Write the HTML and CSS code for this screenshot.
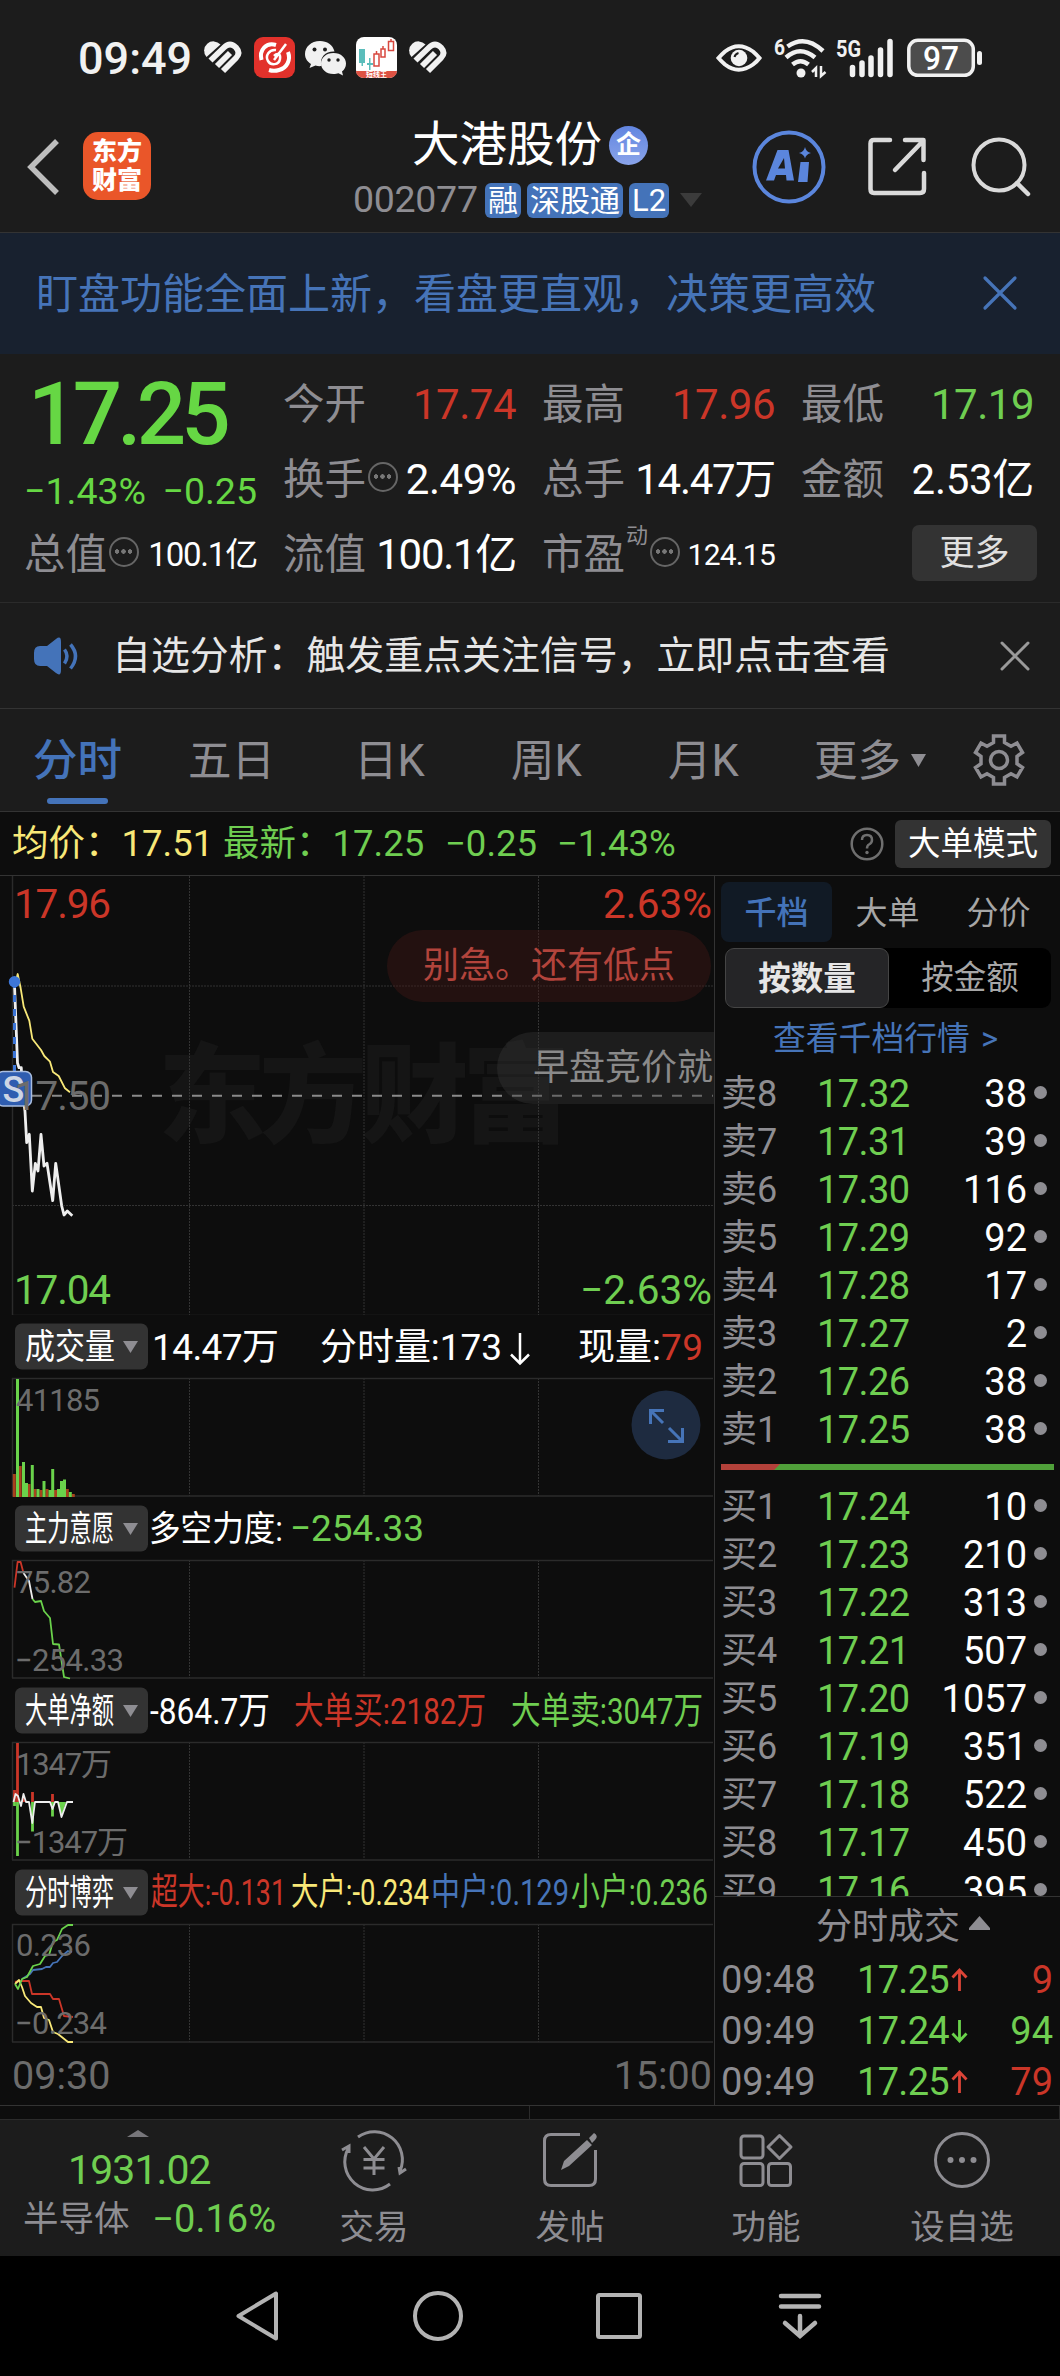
FILE: index.html
```html
<!DOCTYPE html>
<html lang="zh-CN">
<head>
    <meta charset="UTF-8">
    <meta name="viewport" content="width=device-width, initial-scale=1.0">
    <title>大港股份 002077</title>
    <link rel="stylesheet" href="styles.css">
</head>
<body>
    <!-- Status bar -->
    <div class="status-bar">
        <span class="clock">09:49</span>
        <svg class="heart" width="37" height="32" viewBox="0 0 37 32">
            <path d="M1.500 15a9 9 0 0 1 14-12.500z" fill="#f1f1f1"/>
            <path d="M5.500 18.500L19 5.500Q25-.5 31 5.500Q36 11 31 16L18 29M12 24L25 11" fill="none" stroke="#f1f1f1" stroke-width="5.800"/>
        </svg>
        <svg class="app-red" width="41" height="41" viewBox="0 0 41 41">
            <rect width="41" height="41" rx="9" fill="#e2312b"/>
            <path d="M22 8C12 5 5 13 7.500 23M34 15c3 8-1 16-9 18q-5 1.500-10 0" fill="none" stroke="#fff" stroke-width="4"/>
            <path d="M32 7L20 23M22 13c-7-1-11 6-8 11s11 4 12-2-3-6-6-3" fill="none" stroke="#fff" stroke-width="2.500"/>
        </svg>
        <svg class="wechat" width="41" height="36" viewBox="0 0 41 36">
            <path d="M15 1C6 1 0 7 0 14c0 5 3 8 6 10l-1.500 4 6-2.500c2 .6 4 .8 6 .5C14 17 21 11 29.500 11.500 28 5 22 1 15 1z" fill="#f1f1f1"/>
            <path d="M28.500 13C21 13 16 18 16 23.500S21 34 28.500 34c2 0 3.500-.3 5-.8l4.500 2.300-1-4c2.500-2 4-4.500 4-8C41 18 36 13 28.500 13z" fill="#f1f1f1"/>
            <g fill="#1c1c1c"><circle cx="9.500" cy="9.500" r="2"/><circle cx="20" cy="9.500" r="2"/><circle cx="24" cy="20" r="1.700"/><circle cx="33" cy="20" r="1.700"/></g>
        </svg>
        <svg class="app-k" width="41" height="41" viewBox="0 0 41 41">
            <rect width="41" height="41" rx="8" fill="#fff"/>
            <path d="M0 34h41a8 7 0 0 1-8 7H8a8 7 0 0 1-8-7z" fill="#dd5243"/>
            <path d="M3 12h6v14H3zM5.500 26h1.500v3H5.500zM13 21h1.500v12H13zM11 26h6v2h-6z" fill="#5bbdbb"/>
            <path d="M18 17h5v12h-5zM25 12h4v8h-4zM32.500 4.500h5v9h-5zM20.500 14v3M27 9v3M35 2v2.500" fill="none" stroke="#d8483f" stroke-width="1.500"/>
            <text x="20.500" y="40" font-size="7" font-weight="700" text-anchor="middle" fill="#fff">短线王</text>
        </svg>
        <svg class="heart" width="37" height="32" viewBox="0 0 37 32">
            <path d="M1.500 15a9 9 0 0 1 14-12.500z" fill="#f1f1f1"/>
            <path d="M5.500 18.500L19 5.500Q25-.5 31 5.500Q36 11 31 16L18 29M12 24L25 11" fill="none" stroke="#f1f1f1" stroke-width="5.800"/>
        </svg>
        <div class="status-right">
            <svg width="46" height="32" viewBox="0 0 46 32">
                <path d="M2.500 16Q5 13 9 9.500Q22.500-1 37 9.500Q41 13 43.500 16Q41 19.500 37 22.500Q22.500 33 9 22.500Q5 19 2.500 16z" fill="none" stroke="#f1f1f1" stroke-width="4"/>
                <circle cx="23" cy="16" r="8.300" fill="#f1f1f1"/>
                <path d="M18.500 15a5.500 5.500 0 0 1 4-4" fill="none" stroke="#1c1c1c" stroke-width="2"/>
            </svg>
            <svg width="53" height="40" viewBox="0 0 53 40">
                <text x="0" y="16.500" font-size="22" font-weight="700" textLength="11" lengthAdjust="spacingAndGlyphs" fill="#f1f1f1">6</text>
                <path d="M13.500 8.500Q31-4 49 13M12 19.500Q26 7 41 19.500M18.500 26.500Q26.500 20 34.500 26.500" fill="none" stroke="#f1f1f1" stroke-width="4.500"/>
                <circle cx="27" cy="35" r="4.500" fill="#f1f1f1"/>
                <path d="M42 39V30l-4 4M47 28v10l4.500-4" fill="none" stroke="#f1f1f1" stroke-width="2.500"/>
            </svg>
            <svg width="58" height="40" viewBox="0 0 58 40">
                <text x="0" y="19" font-size="23" font-weight="700" textLength="25" lengthAdjust="spacingAndGlyphs" fill="#f1f1f1">5G</text>
                <path d="M16.500 29.500v7M26 25v11.500M35 20v16.500M44.500 12v24.500M54 3.500v33" stroke="#f1f1f1" stroke-width="5.500" stroke-linecap="round" fill="none"/>
            </svg>
            <svg width="76" height="40" viewBox="0 0 76 40">
                <rect x="1.800" y="2.300" width="64.500" height="35" rx="9" fill="#4c4c4c" stroke="#f1f1f1" stroke-width="3.500"/>
                <rect x="70" y="13" width="5" height="14" rx="2.500" fill="#f1f1f1"/>
                <text x="34" y="32" font-size="34" font-weight="500" text-anchor="middle" textLength="36" lengthAdjust="spacingAndGlyphs" fill="#fff">97</text>
            </svg>
        </div>
    </div>

    <!-- Header -->
    <header class="header">
        <svg class="back" width="34" height="58" viewBox="0 0 34 58"><path d="M31 3L5 29l26 26" fill="none" stroke="#bdbdbd" stroke-width="5.500"/></svg>
        <div class="logo"><span>东方</span><span>财富</span></div>
        <div class="stock">
            <div class="stock-name">大港股份<span class="ent">企</span></div>
            <div class="stock-code">
                <span class="code">002077</span>
                <span class="tag">融</span>
                <span class="tag">深股通</span>
                <span class="tag tag-l2">L2</span>
                <svg width="22" height="14" viewBox="0 0 22 14"><path d="M0 0h22L11 14z" fill="#3b3b3b"/></svg>
            </div>
        </div>
        <div class="header-icons">
            <svg width="74" height="74" viewBox="0 0 74 74">
                <circle cx="37" cy="37" r="34.500" fill="none" stroke="#5b86dd" stroke-width="4"/>
                <path d="M14 50.500L25.500 20H36.500L42 50.500H34.500L34 45H24L22 50.500zM26 38.500h7L32 28z" fill="#5b86dd" fill-rule="evenodd"/>
                <path d="M48.500 32h8.500l-1.500 20h-9.500zM53 17q1 5 6 6-5 1-6 5.500-1-4.500-6-5.500 5-1 6-6z" fill="#5b86dd"/>
            </svg>
            <svg class="share" width="58" height="59" viewBox="0 0 58 59">
                <path d="M22 3H6Q2.500 3 2.500 6.500V52Q2.500 56 6 56H52Q56 56 56 52V36M37 3H55.500V23M55 4L27 33" fill="none" stroke="#dadada" stroke-width="4.500" stroke-linecap="round" stroke-linejoin="round"/>
            </svg>
            <svg width="60" height="60" viewBox="0 0 60 60">
                <circle cx="28" cy="28" r="25.500" fill="none" stroke="#dadada" stroke-width="4"/>
                <path d="M46 46L57 57" stroke="#dadada" stroke-width="4.500" stroke-linecap="round"/>
            </svg>
        </div>
    </header>

    <div class="banner">
        <span>盯盘功能全面上新，看盘更直观，决策更高效</span>
        <svg width="34" height="34" viewBox="0 0 34 34"><path d="M2 2l30 30M32 2L2 32" stroke="#4674b8" stroke-width="3.200" stroke-linecap="round"/></svg>
    </div>

    <!-- Quote -->
    <section class="quote">
        <div class="price-box">
            <div class="price">17.25</div>
            <div class="change"><span>−1.43%</span><span>−0.25</span></div>
        </div>
        <div class="cell"><label>今开</label><b class="red">17.74</b></div>
        <div class="cell"><label>最高</label><b class="red">17.96</b></div>
        <div class="cell"><label>最低</label><b class="green">17.19</b></div>
        <div class="cell"><label>换手</label><i class="dots"></i><b>2.49%</b></div>
        <div class="cell"><label>总手</label><b class="tight">14.47万</b></div>
        <div class="cell"><label>金额</label><b class="amount">2.53亿</b></div>
        <div class="cell"><label>总值</label><i class="dots"></i><b class="small">100.1亿</b></div>
        <div class="cell"><label>流值</label><b class="tight">100.1亿</b></div>
        <div class="cell"><label>市盈</label><sup>动</sup><i class="dots"></i><b class="smaller">124.15</b></div>
        <div class="cell"><button class="more-btn">更多</button></div>
    </section>

    <div class="notice">
        <svg width="46" height="38" viewBox="0 0 46 38">
            <path d="M0 16Q0 9 6 9h7L22 2q5-4 5 3v28q0 7-5 3l-9-7H6q-6 0-6-7z" fill="#4473b9"/>
            <path d="M30.500 12.500q5 6.500 0 14M36.500 7.500q10 11.500 0 24" fill="none" stroke="#4473b9" stroke-width="3.500"/>
        </svg>
        <span>自选分析：触发重点关注信号，立即点击查看</span>
        <svg width="30" height="30" viewBox="0 0 30 30"><path d="M2 2l26 26M28 2L2 28" stroke="#9a9a9a" stroke-width="3" stroke-linecap="round"/></svg>
    </div>

    <!-- Period tabs -->
    <nav class="tabs">
        <span class="tab active">分时</span>
        <span class="tab t2">五日</span>
        <span class="tab t3">日K</span>
        <span class="tab t4">周K</span>
        <span class="tab t5">月K</span>
        <span class="tab t6">更多</span>
        <svg class="caret" width="15" height="13" viewBox="0 0 15 13"><path d="M0 0h15L7.500 13z" fill="#8e8d92"/></svg>
        <svg class="gear" width="52" height="52" viewBox="0 0 52 52">
            <path d="M20.500 2h11v6.500l6.500 3.700 6-3.200 5.500 9.500-5.500 3.800v7.500l5.500 3.700L44 43l-6-3.200-6.500 3.700V50h-11v-6.500L14 39.800 8 43l-5.500-9.500L8 29.800v-7.500l-5.500-3.800L8 9l6 3.200 6.500-3.700z" fill="none" stroke="#8e8d92" stroke-width="3.500"/>
            <circle cx="26" cy="26" r="8.500" fill="none" stroke="#8e8d92" stroke-width="3.500"/>
        </svg>
    </nav>

    <div class="info-row">
        <span class="yellow avg">均价：17.51</span>
        <span class="green last">最新：17.25</span>
        <span class="green diff">−0.25</span>
        <span class="green">−1.43%</span>
        <svg class="help" width="34" height="34" viewBox="0 0 34 34">
            <circle cx="17" cy="17" r="15.300" fill="none" stroke="#6f6f6f" stroke-width="2.500"/>
            <path d="M12 13q0-5 5-5t5 5q0 3-3 4.500-2 1-2 4" fill="none" stroke="#6f6f6f" stroke-width="2.500"/>
            <circle cx="17" cy="25.500" r="1.700" fill="#6f6f6f"/>
        </svg>
        <button class="mode-btn">大单模式</button>
    </div>

    <main class="main">
        <div class="charts">
            <!-- Minute chart -->
            <div class="minute">
                <svg width="714" height="440" viewBox="0 0 714 440">
                    <text class="watermark" x="158" y="258" textLength="412">东方财富</text>
                    <path class="grid" d="M189.500 0V439M364 0V439M538.500 0V439M12 110H713M12 329.500H713"/>
                    <path class="axis" d="M12.500 0V439.500H713"/>
                    <path d="M12 219.700H713" stroke="#8a8a8a" stroke-width="2" stroke-dasharray="10 10"/>
                    <path class="line yellow-line" d="M15.700 105.700L17.700 98 20.700 112.300 23.700 130.700 29.300 144.700 32.300 162.700 41 174 44.300 180 50 185.700 53 196 58.700 200 65 212.300 70 216.300"/>
                    <path class="line white-line price-line" d="M14.300 104L17.500 187 19 191.700H21.300L22 210.700 25 235.700 26.700 266.700 29.300 258.300 32.300 315 35.300 287.300 38 295 41 258.300 44 290 47 287.300 52.700 324.700 55.700 287.300 61.700 330 64 339 67.300 335 72.300 339.700"/>
                    <path d="M14.500 105V196" stroke="#3d76d8" stroke-width="3" stroke-dasharray="7 7"/>
                    <circle cx="14.500" cy="105.700" r="5.700" fill="#3d76d8"/>
                    <rect x="-3" y="195.500" width="34.500" height="34.500" rx="6" fill="#2f5db0" stroke="#a9bddf" stroke-width="1.500"/>
                    <text x="13.500" y="226" class="s-mark">S</text>
                    <text class="label red" x="14" y="42" textLength="97">17.96</text>
                    <text class="label gray" x="14" y="234" textLength="97">17.50</text>
                    <text class="label green" x="14" y="428" textLength="97">17.04</text>
                    <text class="label red" x="603" y="42" textLength="109">2.63%</text>
                    <text class="label green" x="580" y="428" textLength="132">−2.63%</text>
                </svg>
                <div class="bubble bubble-red">别急。还有低点</div>
                <div class="bubble bubble-gray">早盘竞价就</div>
            </div>

            <!-- Volume -->
            <div class="indicator">
                <div class="head">
                    <svg width="714" height="63" viewBox="0 0 714 63">
                        <rect class="picker" x="15" y="8.500" width="133" height="46" rx="7"/>
                        <text x="25" y="44" textLength="90" lengthAdjust="spacingAndGlyphs">成交量</text>
                        <path class="picker-caret" d="M123 26h15l-7.500 12z"/>
                        <text class="num" x="152" y="45" textLength="127">14.47万</text>
                        <text class="num" x="320" y="45" textLength="182">分时量:173</text>
                        <path d="M520 18V48M511 39.500L520 48.500 529 39.500" fill="none" stroke="#fff" stroke-width="2.500"/>
                        <text class="num" x="578" y="45" textLength="83">现量:</text>
                        <text class="num red" x="661" y="45" textLength="42">79</text>
                    </svg>
                </div>
                <svg class="plot" width="714" height="119" viewBox="0 0 714 119">
                    <path class="grid" d="M189.500 0V118M364 0V118M538.500 0V118"/>
                    <path class="axis" d="M12.500 118V.5H713M12 118H713"/>
                    <path d="M14.300 119v-23M20.200 119v-31M29 119v-13M35 119v-8M41 119v-7M47 119v-8M55.500 119v-7M67.300 119v-8M73.300 119v-3" stroke="#a8431d" stroke-width="3"/>
                    <path d="M17.500 119v-118M23.500 119v-35M26.500 119v-14M32.300 119v-32M38 119v-8M44 119v-16M50 119v-7M52.700 119v-28M58.500 119v-8M61.500 119v-16M64.500 119v-17.500M70.300 119v-5" stroke="#6ad24b" stroke-width="3"/>
                    <text class="scale" x="16" y="32.500" textLength="84">41185</text>
                </svg>
                <svg class="expand" width="70" height="70" viewBox="0 0 70 70">
                    <circle cx="35" cy="35" r="34.500" fill="#1e2b40"/>
                    <path d="M19.500 34V20.500H33M20 21L32 33M51.500 38V51.500H37M51 51L38 38" fill="none" stroke="#4674b8" stroke-width="3"/>
                </svg>
            </div>

            <!-- Main force intention -->
            <div class="indicator">
                <div class="head">
                    <svg width="714" height="63" viewBox="0 0 714 63">
                        <rect class="picker" x="15" y="8.500" width="133" height="46" rx="7"/>
                        <text x="25" y="44" textLength="89" lengthAdjust="spacingAndGlyphs">主力意愿</text>
                        <path class="picker-caret" d="M123 26h15l-7.500 12z"/>
                        <text x="149" y="44" textLength="134" lengthAdjust="spacingAndGlyphs">多空力度:</text>
                        <text class="num green" x="290" y="44" textLength="134">−254.33</text>
                    </svg>
                </div>
                <svg class="plot" width="714" height="119" viewBox="0 0 714 119">
                    <path class="grid" d="M189.500 0V118M364 0V118M538.500 0V118"/>
                    <path class="axis" d="M12.500 118V.5H713M12 118H713"/>
                    <path class="line red-line" d="M14.500 27.700L17.600 2H20.600L23.500 13"/>
                    <path class="line white-line" d="M23.500 13L29 21 32.500 39"/>
                    <path class="line green-line" d="M32.500 39L35 42 41 41 44 51 50 58 53 84 59 84.500 64 117 70 118.500"/>
                    <text class="scale" x="16" y="33" textLength="75">75.82</text>
                    <text class="scale" x="15" y="110.500" textLength="109">−254.33</text>
                </svg>
            </div>

            <!-- Net large orders -->
            <div class="indicator">
                <div class="head">
                    <svg width="714" height="63" viewBox="0 0 714 63">
                        <rect class="picker" x="15" y="8.500" width="133" height="46" rx="7"/>
                        <text x="25" y="44" textLength="89" lengthAdjust="spacingAndGlyphs">大单净额</text>
                        <path class="picker-caret" d="M123 26h15l-7.500 12z"/>
                        <text class="num" x="150" y="45" textLength="120" lengthAdjust="spacingAndGlyphs">-864.7万</text>
                        <text class="num red" x="294" y="45" textLength="192" lengthAdjust="spacingAndGlyphs">大单买:2182万</text>
                        <text class="num green" x="511" y="45" textLength="192" lengthAdjust="spacingAndGlyphs">大单卖:3047万</text>
                    </svg>
                </div>
                <svg class="plot" width="714" height="119" viewBox="0 0 714 119">
                    <path class="grid" d="M189.500 0V118M364 0V118M538.500 0V118"/>
                    <path class="axis" d="M12.500 118V.5H713M12 118H713"/>
                    <path d="M14.500 48V60M17.500 1V60M23.500 54V60M32.500 50V60M52.500 52V60" stroke="#cb3628" stroke-width="2.800"/>
                    <path d="M14.500 60V64M17.500 60V114M32.500 60V89.500M52.500 60V74.500" stroke="#6ad24b" stroke-width="2.800"/>
                    <path d="M58 60H66L61.500 74z" fill="#6ad24b"/>
                    <path class="line white-line" d="M13.500 60L15.500 52 18 54 21 64 23.500 52 26 60H29L32.300 81 35 60H50L52.500 67 55 60H58L61.500 75 67 60H73"/>
                    <text class="scale" x="16" y="33" textLength="96">1347万</text>
                    <text class="scale" x="15" y="111" textLength="113">−1347万</text>
                </svg>
            </div>

            <!-- Intraday game -->
            <div class="indicator">
                <div class="head">
                    <svg width="714" height="63" viewBox="0 0 714 63">
                        <rect class="picker" x="15" y="8.500" width="133" height="46" rx="7"/>
                        <text x="25" y="44" textLength="89" lengthAdjust="spacingAndGlyphs">分时博弈</text>
                        <path class="picker-caret" d="M123 26h15l-7.500 12z"/>
                        <text class="num red" x="151" y="44" textLength="135" lengthAdjust="spacingAndGlyphs">超大:-0.131</text>
                        <text class="num yellow" x="291" y="44" textLength="138" lengthAdjust="spacingAndGlyphs">大户:-0.234</text>
                        <text class="num blue" x="431" y="44" textLength="138" lengthAdjust="spacingAndGlyphs">中户:0.129</text>
                        <text class="num green" x="571" y="44" textLength="137" lengthAdjust="spacingAndGlyphs">小户:0.236</text>
                    </svg>
                </div>
                <svg class="plot" width="714" height="119" viewBox="0 0 714 119">
                    <path class="grid" d="M189.500 0V118M364 0V118M538.500 0V118"/>
                    <path class="axis" d="M12.500 118V.5H713M12 118H713"/>
                    <path class="line blue-line" d="M22 55L30 50 33 46 42 45 46 43H50L53 39 57 38 62 32 68 27 72 28"/>
                    <path class="line red-line" d="M15 58L20 57H29L32 70H50L53 75H59L64 92 73 93"/>
                    <path class="line yellow-line" d="M15 60L19 56 22 63 25 72 31 79 37 83H41L44 94 49 96 53 108 58 110 68 118H73"/>
                    <path class="line green-line" d="M15 60L18 65 22 55 27 53 33 42 40 40 45 32 49 31 53 18 57 16 62 5 68 1H73"/>
                    <text class="scale" x="16" y="32" textLength="75">0.236</text>
                    <text class="scale" x="15" y="110" textLength="92">−0.234</text>
                </svg>
            </div>

            <div class="time-axis"><span>09:30</span><span>15:00</span></div>
        </div>

        <!-- Order book -->
        <aside class="book">
            <div class="book-tabs"><span class="on">千档</span><span>大单</span><span>分价</span></div>
            <div class="segment"><span class="on">按数量</span><span>按金额</span></div>
            <a class="book-link">查看千档行情 <span>&gt;</span></a>
            <div class="levels">
                <div class="level"><span>卖8</span><span>17.32</span><span>38</span></div>
                <div class="level"><span>卖7</span><span>17.31</span><span>39</span></div>
                <div class="level"><span>卖6</span><span>17.30</span><span>116</span></div>
                <div class="level"><span>卖5</span><span>17.29</span><span>92</span></div>
                <div class="level"><span>卖4</span><span>17.28</span><span>17</span></div>
                <div class="level"><span>卖3</span><span>17.27</span><span>2</span></div>
                <div class="level"><span>卖2</span><span>17.26</span><span>38</span></div>
                <div class="level"><span>卖1</span><span>17.25</span><span>38</span></div>
                <div class="ratio"><i></i></div>
                <div class="level"><span>买1</span><span>17.24</span><span>10</span></div>
                <div class="level"><span>买2</span><span>17.23</span><span>210</span></div>
                <div class="level"><span>买3</span><span>17.22</span><span>313</span></div>
                <div class="level"><span>买4</span><span>17.21</span><span>507</span></div>
                <div class="level"><span>买5</span><span>17.20</span><span>1057</span></div>
                <div class="level"><span>买6</span><span>17.19</span><span>351</span></div>
                <div class="level"><span>买7</span><span>17.18</span><span>522</span></div>
                <div class="level"><span>买8</span><span>17.17</span><span>450</span></div>
                <div class="level"><span>买9</span><span>17.16</span><span>395</span></div>
            </div>
            <div class="deals">
                <div class="deals-title">分时成交<svg width="21" height="14" viewBox="0 0 21 14"><path d="M10.500 0L21 12v2H0v-2z" fill="#8e8d92"/></svg></div>
                <div class="deal">
                    <span>09:48</span><span>17.25</span>
                    <svg width="17" height="24" viewBox="0 0 17 24"><path d="M8.500 23V2M1.500 9.500L8.500 2l7 7.500" fill="none" stroke="#dc4437" stroke-width="2.800"/></svg>
                    <span class="red">9</span>
                </div>
                <div class="deal">
                    <span>09:49</span><span>17.24</span>
                    <svg width="17" height="24" viewBox="0 0 17 24"><path d="M8.500 1v21M1.500 14.500L8.500 22l7-7.500" fill="none" stroke="#6ad24b" stroke-width="2.800"/></svg>
                    <span class="green">94</span>
                </div>
                <div class="deal">
                    <span>09:49</span><span>17.25</span>
                    <svg width="17" height="24" viewBox="0 0 17 24"><path d="M8.500 23V2M1.500 9.500L8.500 2l7 7.500" fill="none" stroke="#dc4437" stroke-width="2.800"/></svg>
                    <span class="red">79</span>
                </div>
            </div>
        </aside>
    </main>

    <div class="strip"><i></i><i></i></div>

    <!-- Bottom toolbar -->
    <footer class="toolbar">
        <div class="sector">
            <svg width="22" height="7" viewBox="0 0 22 7"><path d="M11 0l11 7H0z" fill="#77767a"/></svg>
            <div class="sector-index">1931.02</div>
            <div class="sector-name"><span>半导体</span><span class="green">−0.16%</span></div>
        </div>
        <div class="tool">
            <svg width="66" height="60" viewBox="0 0 66 60">
                <path d="M17 7a28 28 0 0 1 42 34M49 54A28 28 0 0 1 7.500 18M1 20l7-4v7M65 39l-6 4-1-6" fill="none" stroke="#8e8d92" stroke-width="3"/>
                <path d="M23 17l10 12 10-12M33 29v16M22.500 29.500h21M22.500 38h21" fill="none" stroke="#8e8d92" stroke-width="3"/>
            </svg>
            <span>交易</span>
        </div>
        <div class="tool">
            <svg width="56" height="60" viewBox="0 0 56 60">
                <path d="M38 4.500H9Q2.500 4.500 2.500 11V49Q2.500 55.500 9 55.500H47Q53.500 55.500 53.500 49V20" fill="none" stroke="#8e8d92" stroke-width="3"/>
                <path d="M19 40l3-9L45 10l5 5L27 36zM47 8l5-5q5 3 1 7l-3 3z" fill="#8e8d92"/>
            </svg>
            <span>发帖</span>
        </div>
        <div class="tool">
            <svg width="54" height="60" viewBox="0 0 54 60">
                <g fill="none" stroke="#8e8d92" stroke-width="3"><rect x="2" y="6" width="22" height="22" rx="3"/><rect x="2" y="33.500" width="22" height="22" rx="3"/><rect x="29.500" y="33.500" width="22" height="22" rx="3"/><path d="M40.500 5.500L52 17 40.500 28.500 29 17z" stroke-linejoin="round"/></g>
            </svg>
            <span>功能</span>
        </div>
        <div class="tool">
            <svg width="60" height="60" viewBox="0 0 60 60">
                <circle cx="30" cy="30" r="26.500" fill="none" stroke="#8e8d92" stroke-width="3"/>
                <g fill="#8e8d92"><circle cx="18.500" cy="30" r="3"/><circle cx="30" cy="30" r="3"/><circle cx="41.500" cy="30" r="3"/></g>
            </svg>
            <span>设自选</span>
        </div>
    </footer>

    <!-- System navigation -->
    <div class="sysnav">
        <svg width="44" height="52" viewBox="0 0 44 52"><path d="M41 3.500V48.500L3.500 26z" fill="none" stroke="#b3b3b3" stroke-width="4" stroke-linejoin="round"/></svg>
        <svg width="52" height="52" viewBox="0 0 52 52"><circle cx="26" cy="26" r="23" fill="none" stroke="#b3b3b3" stroke-width="4"/></svg>
        <svg width="46" height="46" viewBox="0 0 46 46"><rect x="2" y="2" width="42" height="42" rx="1.500" fill="none" stroke="#b3b3b3" stroke-width="4"/></svg>
        <svg width="42" height="46" viewBox="0 0 42 46"><path d="M2 3h38M2 13.500h38M21 23v20M6 30l15 13 15-13" fill="none" stroke="#b3b3b3" stroke-width="4.500" stroke-linecap="round"/></svg>
    </div>
</body>
</html>
```

FILE: styles.css
```css
/* Dark theme */
* {
    box-sizing: border-box;
}

body {
    margin: 0;
    width: 1060px;
    height: 2376px;
    overflow: hidden;
    background: #1c1c1c;
    color: #fff;
    font-family: Roboto, "Noto Sans CJK SC", sans-serif;
    font-size: 36px;
    line-height: 1;
}

svg {
    display: block;
    flex: none;
    overflow: visible;
}

span, b, label {
    white-space: nowrap;
}

button {
    border: none;
    color: #e0e0e0;
    font-family: inherit;
    line-height: 1;
    padding: 0;
}

.red { color: #cb3628; fill: #cb3628; }
.green { color: #6fce51; fill: #6fce51; }
.yellow { color: #f8e878; fill: #f8e878; }
.blue { color: #4674b8; fill: #4674b8; }
.gray { fill: #6c6c6c; }

/* Status bar */
.status-bar {
    display: flex;
    align-items: center;
    height: 115px;
    padding: 0 77px 0 78px;
}

.clock {
    width: 127px;
    padding-top: 2px;
    font-size: 45px;
    font-weight: 500;
    color: #f1f1f1;
}

.app-red { margin-left: 12px; }
.wechat { margin-left: 10px; }
.app-k { margin: 0 13px 0 10px; }

.status-right {
    display: flex;
    align-items: center;
    gap: 12px;
    margin-left: auto;
}

.status-right svg:nth-child(2) { margin-right: -3px; }

.status-right svg:nth-child(4) { margin-left: 1px; }

/* Header */
.header {
    display: flex;
    align-items: center;
    height: 118px;
    padding: 0 29px 0 26px;
    border-bottom: 1px solid #333;
}

.back { margin-top: -14px; }

.logo {
    display: flex;
    flex-direction: column;
    justify-content: center;
    width: 68px;
    height: 68px;
    margin: -16px 0 0 23px;
    border-radius: 15px;
    background: #ea5629;
    font-size: 25px;
    font-weight: 900;
    line-height: 29px;
    text-align: center;
}

.stock {
    width: 350px;
    margin-left: 202px;
    margin-top: -11px;
}

.stock-name {
    display: flex;
    align-items: center;
    padding-left: 59px;
    font-size: 47.500px;
    line-height: 54px;
}

.ent {
    width: 39px;
    height: 39px;
    margin-left: 7px;
    border-radius: 50%;
    background: linear-gradient(#6285e0, #8aa4ea);
    font-size: 25px;
    font-weight: 700;
    line-height: 38px;
    text-align: center;
}

.stock-code {
    display: flex;
    align-items: center;
    height: 36px;
    margin-top: 10px;
    color: #8e8d92;
}

.code {
    width: 132px;
    font-size: 37.500px;
    letter-spacing: -0.300px;
}

.tag {
    height: 35px;
    margin-right: 6px;
    padding: 0 3px;
    border-radius: 6px;
    background: #4473b9;
    color: #fff;
    font-size: 30px;
    line-height: 35px;
}

.tag-l2 {
    width: 40px;
    margin-right: 11px;
    padding: 0;
    font-size: 31px;
    text-align: center;
}

.header-icons {
    display: flex;
    align-items: center;
    gap: 42px;
    margin-left: auto;
    margin-top: -14px;
}

.share { margin-right: 3px; }

.banner {
    display: flex;
    align-items: center;
    justify-content: space-between;
    height: 121px;
    padding: 2px 43px 0 36px;
    background: #18212f;
    color: #4674b8;
    font-size: 42px;
}

.banner svg { margin-bottom: 3px; }

/* Quote */
.quote {
    display: grid;
    grid-template-columns: repeat(4, 233px);
    grid-template-rows: repeat(3, 75px);
    column-gap: 26px;
    height: 249px;
    padding: 13px 0 0 24px;
    border-bottom: 1px solid #2b2b2b;
}

.price-box {
    grid-row: span 2;
    color: #66d744;
}

.price {
    padding: 5px 0 0 4px;
    font-size: 87px;
    font-weight: 500;
    line-height: 84px;
    letter-spacing: -4.800px;
}

.change {
    display: flex;
    justify-content: space-between;
    margin-top: 13px;
    font-size: 37.500px;
    line-height: 44px;
}

.cell {
    display: flex;
    align-items: center;
}

.cell label {
    color: #8e8d92;
    font-size: 41.500px;
}

.cell b {
    margin-left: auto;
    font-size: 42px;
    font-weight: 400;
    letter-spacing: -0.500px;
}

.cell b.tight { letter-spacing: -1.300px; }
.cell b.amount { letter-spacing: -0.300px; }
.cell b.small { font-size: 33px; letter-spacing: -1.200px; }
.cell b.smaller { font-size: 30px; letter-spacing: -0.800px; }

.cell sup {
    align-self: flex-start;
    margin: 6px 0 0 1px;
    color: #8e8d92;
    font-size: 22px;
    line-height: 26px;
}

/* Round hint with three dots */
.dots {
    width: 30px;
    height: 30px;
    margin: 0 0 6px 2px;
    border: 2.500px solid #666;
    border-radius: 50%;
    background:
        radial-gradient(circle at 6px 12.500px, #777 2px, transparent 2.500px),
        radial-gradient(circle at 12.500px 12.500px, #777 2px, transparent 2.500px),
        radial-gradient(circle at 19px 12.500px, #777 2px, transparent 2.500px);
}

.more-btn {
    width: 125px;
    height: 56px;
    margin: 0 -3px 3px auto;
    border-radius: 7px;
    background: #333;
    font-size: 35px;
}

.notice {
    display: flex;
    align-items: center;
    height: 105px;
    padding: 0 30px 0 34px;
    color: #e6e6e6;
    font-size: 38.900px;
}

.notice span {
    margin-left: 32px;
    padding-top: 1px;
}

.notice svg:last-child { margin-left: auto; }

/* Period tabs */
.tabs {
    display: flex;
    align-items: center;
    height: 104px;
    padding-left: 33px;
    border-top: 1px solid #333;
    border-bottom: 1px solid #333;
    color: #8e8d92;
    font-size: 43.500px;
}

.tab { padding-top: 3px; }

.tab.active {
    position: relative;
    width: 155px;
    color: #4473b9;
    font-size: 44.500px;
    font-weight: 500;
}

.tab.active::after {
    content: "";
    position: absolute;
    left: 14px;
    bottom: -20px;
    width: 61px;
    height: 6px;
    border-radius: 3px;
    background: #4473b9;
}

.t2 { width: 166px; }
.t3 { width: 157px; }
.t4 { width: 157px; }
.t5 { width: 146px; }
.t6 { width: 97px; }

.gear { margin-left: 47px; }

.info-row {
    display: flex;
    align-items: center;
    height: 64px;
    padding-left: 12px;
    border-bottom: 1px solid #333;
    background: #0d0d0d;
    font-size: 36.500px;
}

.info-row span { padding-top: 1px; }

.avg { width: 211px; }
.last { width: 222px; }
.diff { width: 112px; }
.help { margin-left: auto; margin-right: 11px; }

.mode-btn {
    width: 156px;
    height: 48px;
    margin-right: 9px;
    padding-top: 2px;
    border-radius: 6px;
    background: #333;
    color: #fff;
    font-size: 32.500px;
}

/* Main area */
.main {
    display: flex;
    height: 1230px;
    background: #0d0d0d;
    border-bottom: 1px solid #333;
}

.charts {
    width: 715px;
    border-right: 1px solid #333;
}

.minute {
    position: relative;
    height: 439px;
    overflow: hidden;
}

.grid {
    fill: none;
    stroke: #333;
    stroke-width: 1;
    stroke-dasharray: 2 1;
}

.axis {
    fill: none;
    stroke: #2b2b2b;
    stroke-width: 1.500;
}

.line {
    fill: none;
    stroke-width: 1.800;
    stroke-linejoin: round;
}

.price-line { stroke-width: 2.800; }

.white-line { stroke: #eee; }
.yellow-line { stroke: #f8e878; }
.red-line { stroke: #cb3628; }
.green-line { stroke: #6ad24b; }
.blue-line { stroke: #4674b8; }

.label { font-size: 40.500px; }

.scale {
    font-size: 31px;
    fill: #6c6c6c;
}

.watermark {
    font-size: 108px;
    font-weight: 900;
    fill: #151515;
}

.s-mark {
    font-size: 36px;
    font-weight: 500;
    text-anchor: middle;
    fill: #cdd5e4;
}

.bubble {
    position: absolute;
    height: 72px;
    line-height: 73px;
    white-space: nowrap;
}

.bubble-red {
    top: 54px;
    right: 3px;
    width: 324px;
    padding-left: 36px;
    border-radius: 36px;
    background: rgba(70, 24, 22, 0.400);
    color: #b3443c;
    font-size: 36px;
}

.bubble-gray {
    top: 156px;
    right: 0;
    width: 217px;
    padding-left: 36px;
    border-radius: 36px 0 0 36px;
    background: rgba(56, 56, 56, 0.400);
    color: #8a8a8a;
    font-size: 36px;
}

.indicator {
    position: relative;
    height: 182px;
}

.head {
    height: 63px;
    fill: #fff;
    font-size: 35.500px;
}

.num { font-size: 37px; }
.picker { fill: #333; }
.picker-caret { fill: #8e8d92; }

.expand {
    position: absolute;
    left: 631px;
    top: 75px;
}

.time-axis {
    display: flex;
    justify-content: space-between;
    padding: 9px 2px 0 12px;
    color: #6c6c6c;
    font-size: 39.500px;
    line-height: 48px;
}

/* Order book */
.book {
    display: flex;
    flex-direction: column;
    width: 345px;
}

.book-tabs {
    display: flex;
    flex: none;
    height: 66px;
    padding: 6px 0 0 6px;
    font-size: 32px;
    line-height: 62px;
    text-align: center;
    color: #a6a6a6;
}

.book-tabs span { width: 111px; }

.book-tabs .on {
    border-radius: 8px;
    background: #111a25;
    color: #4473b9;
    font-weight: 500;
}

.segment {
    display: flex;
    flex: none;
    width: 326px;
    height: 60px;
    margin: 6px 0 0 10px;
    border-radius: 9px;
    background: #000;
    color: #a6a6a6;
    font-size: 32.500px;
    line-height: 61px;
    text-align: center;
}

.segment span { flex: 1; }

.segment .on {
    border: 1px solid #454545;
    border-radius: 9px;
    background: #252527;
    color: #e6e6e6;
    font-weight: 700;
}

.book-link {
    flex: none;
    padding: 5px 0 0 58px;
    color: #4674b8;
    font-size: 32.800px;
    line-height: 52px;
    white-space: nowrap;
}

.book-link span { margin-left: 3px; }

.levels {
    flex: none;
    height: 831px;
    padding-top: 5px;
    overflow: hidden;
}

.level {
    display: flex;
    align-items: center;
    height: 48px;
    padding: 0 13px 0 6px;
    font-size: 38px;
}

.level span:nth-child(1) {
    width: 96px;
    color: #8e8d92;
    font-size: 36px;
}

.level span:nth-child(2) {
    color: #6fce51;
    letter-spacing: -0.600px;
}

.level span:nth-child(3) {
    margin-left: auto;
}

.level::after {
    content: "";
    width: 13px;
    height: 13px;
    margin: 0 0 3px 7px;
    border-radius: 50%;
    background: #8e8d92;
}

.ratio {
    width: 333px;
    height: 6px;
    margin: 10px 0 13px 6px;
    background: #50a03a;
}

.ratio i {
    display: block;
    width: 59px;
    height: 6px;
    background: #b3413a;
    clip-path: polygon(0 0, 100% 0, 90% 100%, 0 100%);
}

.deals {
    flex: none;
    border-top: 1px solid #333;
    color: #8e8d92;
}

.deals-title {
    display: flex;
    align-items: center;
    height: 57px;
    padding: 2px 0 0 101px;
    font-size: 36px;
}

.deals-title svg { margin: 0 0 8px 9px; }

.deal {
    display: flex;
    align-items: center;
    height: 51px;
    padding: 0 7px 0 6px;
    font-size: 38px;
}

.deal span:nth-child(1) { width: 136px; }

.deal span:nth-child(2) {
    width: 94px;
    color: #6fce51;
    letter-spacing: -0.700px;
}

.deal span:last-child { margin-left: auto; }

.strip {
    display: flex;
    height: 14px;
    background: #0d0d0d;
    border-bottom: 1px solid #2b2b2b;
}

.strip i {
    width: 530px;
    border-right: 1px solid #2b2b2b;
}

/* Bottom toolbar */
.toolbar {
    display: flex;
    height: 136px;
    color: #8e8d92;
    font-size: 34.500px;
}

.sector {
    width: 276px;
    padding: 10px 0 0 23px;
}

.sector svg { margin-left: 104px; }

.sector-index {
    margin-top: 9px;
    padding-left: 45px;
    color: #6fce51;
    font-size: 41px;
    line-height: 48px;
    letter-spacing: -0.900px;
}

.sector-name {
    display: flex;
    align-items: center;
    justify-content: space-between;
    height: 50px;
    font-size: 35.500px;
    line-height: 50px;
}

.sector-name .green { font-size: 38px; }

.tool {
    display: flex;
    flex-direction: column;
    align-items: center;
    width: 196px;
    padding-top: 10px;
    line-height: 44px;
}

.tool span { margin-top: 15px; }

/* System navigation */
.sysnav {
    display: flex;
    align-items: center;
    height: 120px;
    padding-left: 235px;
    background: #000;
}

.sysnav svg:nth-child(2) { margin-left: 133px; }
.sysnav svg:nth-child(3) { margin-left: 132px; }
.sysnav svg:nth-child(4) { margin-left: 137px; }
```
